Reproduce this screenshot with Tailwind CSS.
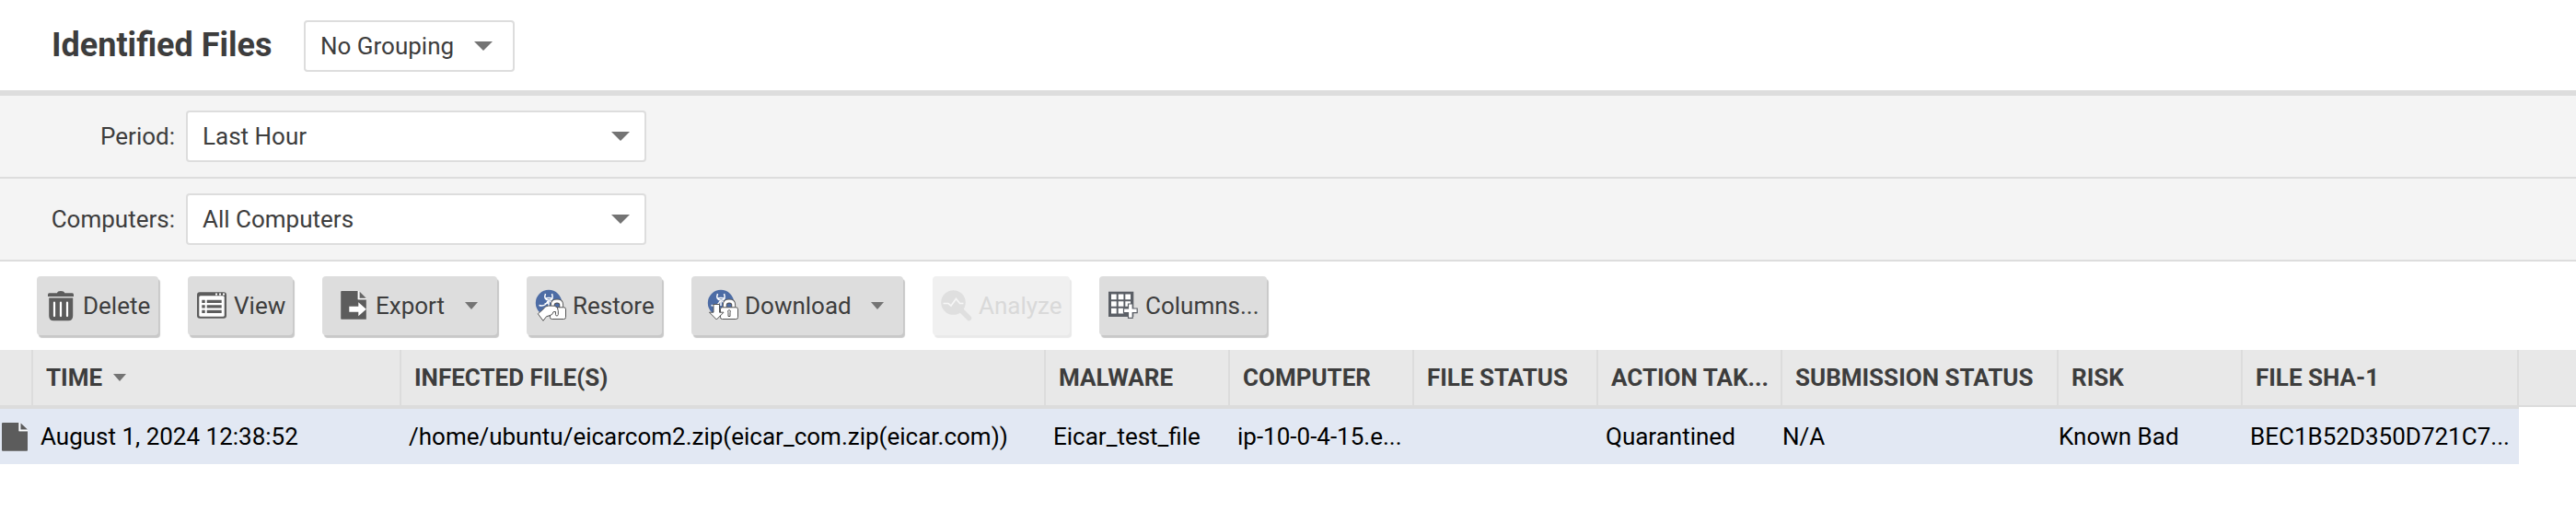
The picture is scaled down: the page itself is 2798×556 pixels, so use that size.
<!DOCTYPE html>
<html lang="en">
<head>
<meta charset="utf-8">
<title>Identified Files</title>
<script src="https://cdn.jsdelivr.net/npm/@tailwindcss/browser@4"></script>
</head>
<body class="h-[556px] w-[2798px] overflow-hidden bg-white font-['Roboto',sans-serif] text-[26px] leading-[30px] text-[#3d3d3d]">
<header class="flex h-[104px] items-center border-b-6 border-[#ddd] pl-14">
  <h1 class="w-[274px] text-[36px] leading-[42px] font-bold whitespace-nowrap">Identified Files</h1>
  <div class="mt-0.5 flex h-14 w-[229px] items-center justify-between rounded-[4px] border-2 border-[#ddd] bg-white pr-[22px] pl-4">
    <span>No Grouping</span>
    <svg class="h-[10px] w-[20px]" viewBox="0 0 20 10" fill="#747474"><path d="M0 0h20L10 10z"/></svg>
  </div>
</header>
<section class="bg-[#f4f4f4]">
  <div class="flex h-[90px] items-center border-b-2 border-[#ddd]">
    <label class="w-[202px] pr-3 text-right">Period:</label>
    <div class="flex h-14 w-[500px] items-center justify-between rounded-[4px] border-2 border-[#ddd] bg-white pr-4 pl-4">
      <span>Last Hour</span>
      <svg class="h-[10px] w-[20px]" viewBox="0 0 20 10" fill="#747474"><path d="M0 0h20L10 10z"/></svg>
    </div>
  </div>
  <div class="flex h-[90px] items-center border-b-2 border-[#ddd]">
    <label class="w-[202px] pr-3 text-right">Computers:</label>
    <div class="flex h-14 w-[500px] items-center justify-between rounded-[4px] border-2 border-[#ddd] bg-white pr-4 pl-4">
      <span>All Computers</span>
      <svg class="h-[10px] w-[20px]" viewBox="0 0 20 10" fill="#747474"><path d="M0 0h20L10 10z"/></svg>
    </div>
  </div>
</section>
<nav class="flex h-24 items-center gap-8 pl-10 whitespace-nowrap">
  <button class="flex h-16 w-[132px] items-center gap-2 rounded-[4px] bg-[#ddd] pl-[10px] shadow-[2px_3px_1px_#c8c8c8]">
    <svg class="size-8 shrink-0 overflow-visible" viewBox="0 0 32 32"><path fill="#5c5c5c" d="M12 2.2Q12.500 0 16 0t4.300 2.200H28.500Q30 2.200 30 4v2H2V4q0-1.800 1.500-1.800zM3.200 7.500h26V27q0 5.300-5 5.300H8.200q-5 0-5-5.300z"/><path stroke="#fff" stroke-width="2.200" stroke-linecap="round" d="M9 12.500v14.600M16 12.500v14.600M23 12.500v14.600"/></svg>
    <span>Delete</span>
  </button>
  <button class="flex h-16 w-[114px] items-center gap-2 rounded-[4px] bg-[#ddd] pl-[10px] shadow-[2px_3px_1px_#c8c8c8]">
    <svg class="size-8 shrink-0" viewBox="0 0 32 32"><rect y="1.300" width="32" height="28.500" rx="3" fill="#5c5c5c"/><rect x="2.300" y="5.300" width="27.400" height="22.400" rx="1.500" fill="#fff"/><path fill="#fff" d="M20 2.500h2v2h-2zM24 2.500h2v2h-2zM28 2.500h2v2h-2z"/><path fill="#5c5c5c" d="M5.300 9.700h3.400V13H5.300zM5.300 15.200h3.400v3.300H5.300zM5.300 20.700h3.400V24H5.300zM10.700 9.700h16V13h-16zM10.700 15.200h16v3.300h-16zM10.700 20.700h16V24h-16z"/></svg>
    <span>View</span>
  </button>
  <button class="flex h-16 w-[190px] items-center gap-2 rounded-[4px] bg-[#ddd] pl-[18px] shadow-[2px_3px_1px_#c8c8c8]">
    <svg class="size-8 shrink-0" viewBox="0 0 32 32"><path fill="#5c5c5c" d="M3 0h17.800v9.200h9v21.500H3Q2.200 30.700 2.200 30V1Q2.200 0 3 0z"/><path fill="#666" d="M22.700.7l7 7h-7z"/><path fill="none" stroke="#fff" stroke-width="1.400" d="M21.400 0v8.600h8.400"/><path fill="#fff" d="M11.300 16.700h10v-4.400l8.500 7.400-8.500 7.600v-4.600h-10z"/></svg>
    <span>Export</span>
    <svg class="ml-[14px] h-2 w-[14px]" viewBox="0 0 14 8" fill="#747474"><path d="M0 0h14L7 8z"/></svg>
  </button>
  <button class="flex h-16 w-[147px] items-center gap-2 rounded-[4px] bg-[#ddd] pl-[10px] shadow-[2px_3px_1px_#c8c8c8]">
    <svg class="size-8 shrink-0 overflow-visible" viewBox="0 0 32 32"><circle cx="14" cy="13" r="14.200" fill="#4d6ca5"/><g fill="none" stroke="#fff" stroke-width="1.500"><path d="M10.500 3q-2.500 6.500 3.500 7T17.500 3M3.500 15.500q6.500 2 9.500-4.500M15.500 11q2 3 4 3M14 10v6M10 8.500q4-2 8 0M9.500 14.500l4-2"/></g><path fill="none" stroke="#555" stroke-width="4.800" d="M18.300 18v-3q0-4 4.700-4t4.700 4v3"/><path fill="none" stroke="#fff" stroke-width="2.900" d="M18.300 19v-4q0-4 4.700-4t4.700 4v4"/><rect x="15.500" y="17.800" width="17" height="12.700" rx="2" fill="#fff" stroke="#555"/><path fill="#fff" stroke="#555" stroke-linejoin="round" d="M2.300 24.800L7.800 20q2.200-3.800 6-4l6.500.2q4 .8 4 5.300v4q-.5 2-2 1.500-1.300-.5-.8-4.500l-2.500.2q-.5 3.300-4 4l-3.500 1L8 32.300z"/></svg>
    <span>Restore</span>
  </button>
  <button class="flex h-16 w-[230px] items-center gap-2 rounded-[4px] bg-[#ddd] pl-[18px] shadow-[2px_3px_1px_#c8c8c8]">
    <svg class="size-8 shrink-0 overflow-visible" viewBox="0 0 32 32"><circle cx="14" cy="13" r="14.200" fill="#4d6ca5"/><g fill="none" stroke="#fff" stroke-width="1.500"><path d="M10.500 3q-2.500 6.500 3.500 7T17.500 3M3.500 15.500q6.500 2 9.500-4.500M15.500 11q2 3 4 3M14 10v6M10 8.500q4-2 8 0"/></g><path fill="none" stroke="#555" stroke-width="4.800" d="M18.300 18v-3q0-4 4.700-4t4.700 4v3"/><path fill="none" stroke="#fff" stroke-width="2.900" d="M18.300 19v-4q0-4 4.700-4t4.700 4v4"/><rect x="13.500" y="17.800" width="19" height="12.700" rx="2" fill="#fff" stroke="#555"/><path fill="#fff" stroke="#555" d="M22 27.500v-3.700q-1.200-3 1-3.200 2.200.2 1 3.200v3.700zM6 14.500h6.500v8.700H17l-7.700 7.800-7.800-7.800H6z"/></svg>
    <span>Download</span>
    <svg class="ml-[13px] h-2 w-[14px]" viewBox="0 0 14 8" fill="#747474"><path d="M0 0h14L7 8z"/></svg>
  </button>
  <button class="flex h-16 w-[149px] items-center gap-2 rounded-[4px] bg-[#f0f0f0] pl-[10px] text-[#d9d9d9] shadow-[2px_3px_1px_#e9e9e9]" disabled>
    <svg class="size-8 shrink-0 overflow-visible" viewBox="0 0 32 32"><circle cx="12.500" cy="12.500" r="13.300" fill="#dfdfdf"/><path stroke="#dfdfdf" stroke-width="5.500" stroke-linecap="round" d="M20 20l9.500 9.500"/><path fill="none" stroke="#f6f6f6" stroke-width="1.700" d="M1.500 13.500H7L10 16l5.500-7.500 4 5h4"/></svg>
    <span>Analyze</span>
  </button>
  <button class="flex h-16 w-[182px] items-center gap-2 rounded-[4px] bg-[#ddd] pl-[10px] shadow-[2px_3px_1px_#c8c8c8]">
    <svg class="size-8 shrink-0" viewBox="0 0 32 32"><path fill="#5b5f66" d="M0 .7h27.300V28H0z"/><path fill="#fff" d="M3 3.500h5.700v5.700H3zM10.700 3.500h5.700v5.700h-5.700zM18.300 3.500H24v5.700h-5.700zM3 11.200h5.700v5.600H3zM10.700 11.200h5.700v5.600h-5.700zM18.300 11.200H24v5.600h-5.700zM3 18.800h5.700v5.700H3zM10.700 18.800h5.700v5.700h-5.700z"/><path fill="#fff" stroke="#5b5f66" stroke-width="1.200" d="M21.500 14h4.700v5h5v4.700h-5v5.600h-4.700v-5.600h-5V19h5z"/></svg>
    <span>Columns...</span>
  </button>
</nav>
<main>
  <div class="flex h-[62px] items-center border-b-2 border-[#dcdcdc] bg-[#e8e8e8] font-bold whitespace-nowrap">
    <div class="h-full w-9 border-r-2 border-[#dcdcdc]"></div>
    <div class="flex h-full w-[400px] items-center gap-3 border-r-2 border-[#dcdcdc] pl-[14px]">TIME <svg class="h-2 w-[14px]" viewBox="0 0 14 8" fill="#747474"><path d="M0 0h14L7 8z"/></svg></div>
    <div class="flex h-full w-[700px] items-center border-r-2 border-[#dcdcdc] pl-[14px]">INFECTED FILE(S)</div>
    <div class="flex h-full w-[200px] items-center border-r-2 border-[#dcdcdc] pl-[14px]">MALWARE</div>
    <div class="flex h-full w-[200px] items-center border-r-2 border-[#dcdcdc] pl-[14px]">COMPUTER</div>
    <div class="flex h-full w-[200px] items-center border-r-2 border-[#dcdcdc] pl-[14px]">FILE STATUS</div>
    <div class="flex h-full w-[200px] items-center border-r-2 border-[#dcdcdc] pl-[14px]">ACTION TAK...</div>
    <div class="flex h-full w-[300px] items-center border-r-2 border-[#dcdcdc] pl-[14px]">SUBMISSION STATUS</div>
    <div class="flex h-full w-[200px] items-center border-r-2 border-[#dcdcdc] pl-[14px]">RISK</div>
    <div class="flex h-full w-[300px] items-center border-r-2 border-[#dcdcdc] pl-[14px]">FILE SHA-1</div>
  </div>
  <div class="flex h-[62px] w-[2736px] items-center border-t-2 border-[#dcdcdc] bg-[#e2e8f3] whitespace-nowrap text-black">
    <div class="w-11 pl-0.5"><svg class="h-[31px] w-7" viewBox="0 0 28 31"><path fill="#5c5c5c" d="M1 0h17.500v9.300H28V30q0 .800-1 .800H1Q0 30.800 0 30V1Q0 0 1 0z"/><path fill="#5c5c5c" d="M20.500.5l7.500 7h-7.500z"/><path fill="none" stroke="#fff" stroke-width="1.400" d="M19.300 0v8.500H28"/></svg></div>
    <div class="w-[400px]">August 1, 2024 12:38:52</div>
    <div class="w-[700px]">/home/ubuntu/eicarcom2.zip(eicar_com.zip(eicar.com))</div>
    <div class="w-[200px]">Eicar_test_file</div>
    <div class="w-[400px]">ip-10-0-4-15.e...</div>
    <div class="w-[192px]">Quarantined</div>
    <div class="w-[300px]">N/A</div>
    <div class="w-[208px]">Known Bad</div>
    <div>BEC1B52D350D721C7...</div>
  </div>
</main>
</body>
</html>
